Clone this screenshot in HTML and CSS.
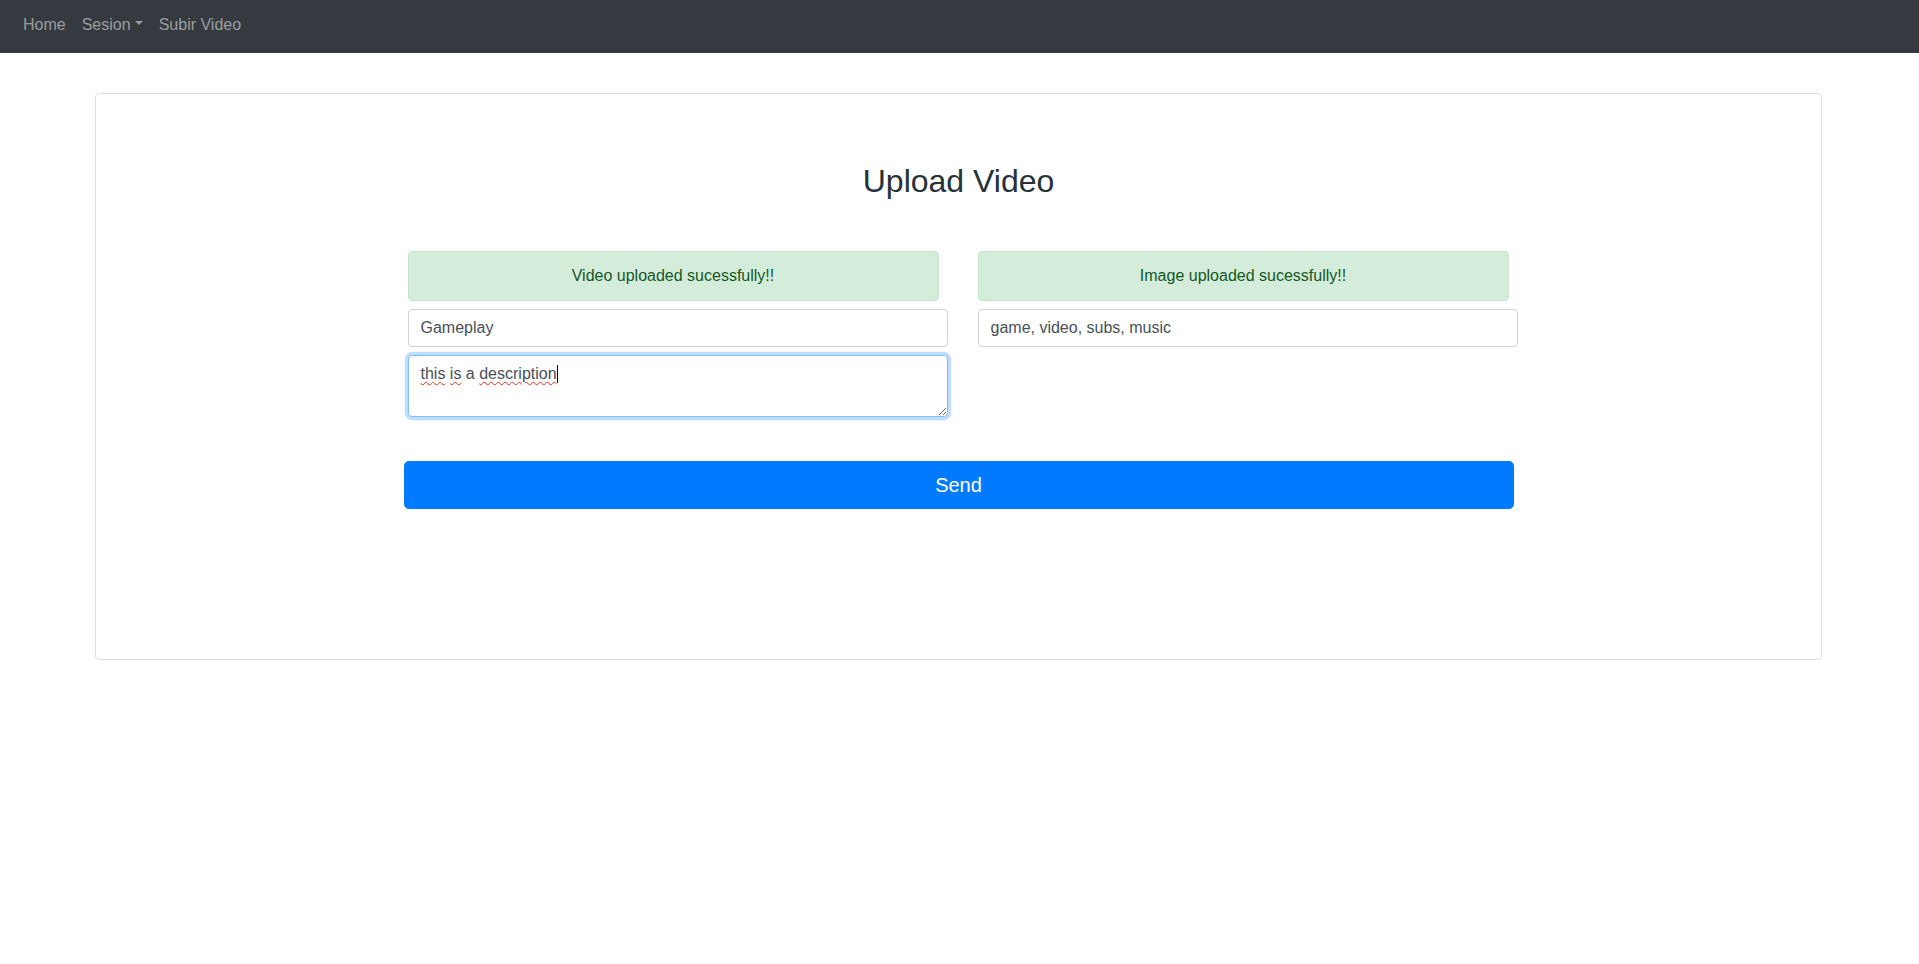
FILE: index.html
```html
<!DOCTYPE html>
<html lang="en">
<head>
<meta charset="utf-8">
<title>Upload Video</title>
<link rel="stylesheet" href="styles.css">
</head>
<body>
<nav class="navbar">
  <a class="nav-link" href="#">Home</a>
  <a class="nav-link dropdown-toggle" href="#">Sesion</a>
  <a class="nav-link" href="#">Subir Video</a>
</nav>
<main class="card">
  <h2 class="title">Upload Video</h2>
  <form class="container">
    <div class="row">
      <div class="col">
        <div class="alert">Video uploaded sucessfully!!</div>
        <input class="form-control" type="text" value="Gameplay">
        <div class="form-control textarea focused" contenteditable="true" spellcheck="false"><span class="misspelled">this</span> <span class="misspelled">is</span> a <span class="misspelled">description</span><span class="caret"></span></div>
      </div>
      <div class="col">
        <div class="alert">Image uploaded sucessfully!!</div>
        <input class="form-control" type="text" value="game, video, subs, music">
      </div>
    </div>
    <button class="btn-send" type="button">Send</button>
  </form>
</main>
</body>
</html>
```
FILE: styles.css
```css
* { box-sizing: border-box; }

body {
  margin: 0;
  font-family: "Liberation Sans", Arial, sans-serif;
  font-size: 16px;
  line-height: 1.5;
  color: #212529;
  background: #fff;
}

.navbar {
  height: 53px;
  background: #343a40;
  display: flex;
  align-items: center;
  padding: 0 15px 4px;
}

.nav-link {
  color: rgba(255, 255, 255, 0.5);
  text-decoration: none;
  padding: 0 8px;
  font-size: 16px;
}

.dropdown-toggle::after {
  content: "";
  display: inline-block;
  margin-left: 0.255em;
  vertical-align: 0.255em;
  border-top: 0.3em solid;
  border-right: 0.3em solid transparent;
  border-left: 0.3em solid transparent;
}

.card {
  margin: 40px 97px 0 95px;
  border: 1px solid rgba(0, 0, 0, 0.125);
  border-radius: 4px;
  padding: 68px 0 150px;
}

.title {
  margin: 0 0 51px;
  font-size: 32px;
  font-weight: 400;
  line-height: 38px;
  text-align: center;
  color: #263238;
}

.container {
  width: 1110px;
  margin: 0 auto;
}

.row {
  display: grid;
  grid-template-columns: 540px 540px;
  column-gap: 30px;
  align-items: start;
  margin-left: 4px;
  margin-right: -4px;
}

.col {
  display: flex;
  flex-direction: column;
  gap: 8px;
}

.alert {
  width: 531px;
  height: 50px;
  padding: 12px 20px;
  color: #155724;
  background: #d4edda;
  border: 1px solid #c3e6cb;
  border-radius: 4px;
  text-align: center;
}

.form-control {
  display: block;
  width: 540px;
  height: 38px;
  padding: 6px 12px;
  font-family: inherit;
  font-size: 16px;
  line-height: 24px;
  color: #495057;
  background: #fff;
  border: 1px solid #ced4da;
  border-radius: 4px;
  outline: none;
}

.textarea {
  height: 62px;
  overflow: auto;
  resize: vertical;
}

.focused {
  border-color: #80bdff;
  box-shadow: 0 0 0 3.2px rgba(0, 123, 255, 0.25);
}

.misspelled {
  text-decoration: underline wavy #e0321f;
  text-decoration-thickness: 1px;
  text-underline-offset: 2px;
}

.caret {
  display: inline-block;
  width: 1px;
  height: 18px;
  background: #000;
  vertical-align: -4px;
}

.btn-send {
  display: block;
  width: 100%;
  height: 48px;
  margin-top: 44px;
  padding: 8px 16px;
  font-family: inherit;
  font-size: 20px;
  line-height: 30px;
  color: #fff;
  background: #007bff;
  border: 1px solid #007bff;
  border-radius: 4.8px;
  cursor: pointer;
}
```
